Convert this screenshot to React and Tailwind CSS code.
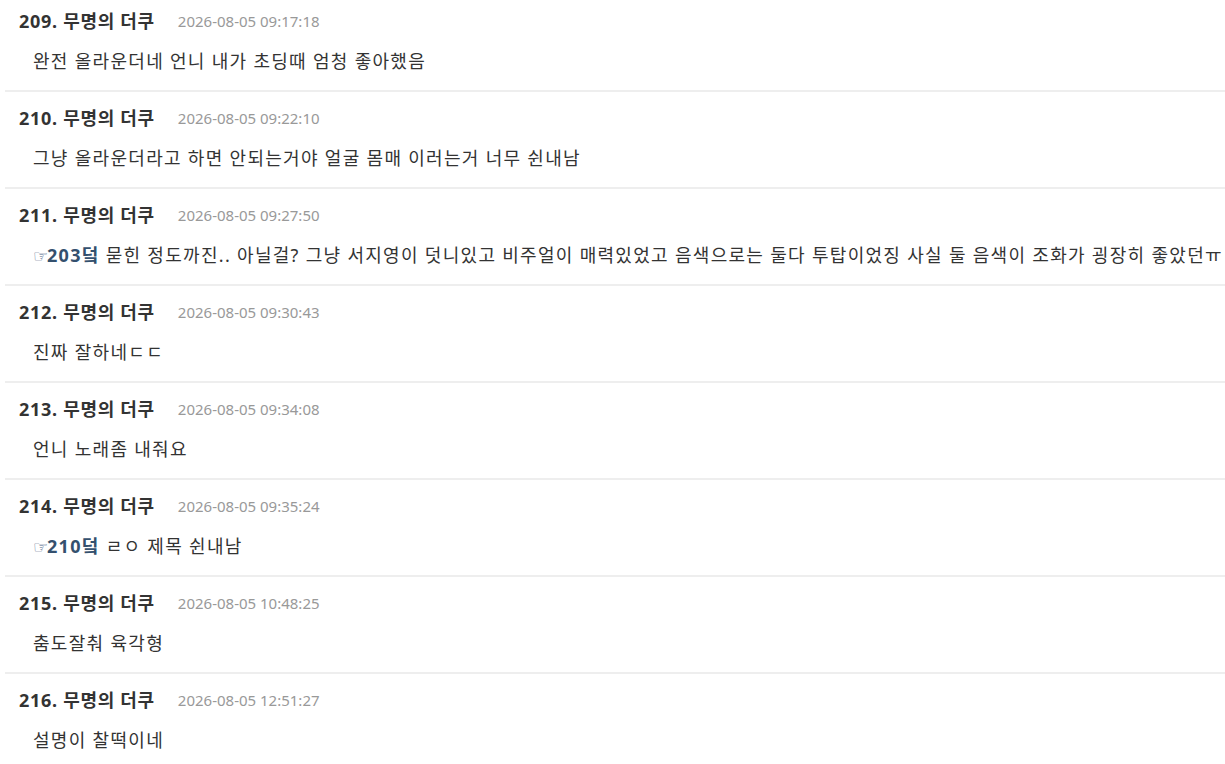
const comments = [
	{ no: 209, date: '2026-08-05 09:17:18', text: '완전 올라운더네 언니 내가 초딩때 엄청 좋아했음' },
	{ no: 210, date: '2026-08-05 09:22:10', text: '그냥 올라운더라고 하면 안되는거야 얼굴 몸매 이러는거 너무 쉰내남' },
	{
		no: 211,
		date: '2026-08-05 09:27:50',
		quote: 203,
		text: '묻힌 정도까진.. 아닐걸? 그냥 서지영이 덧니있고 비주얼이 매력있었고 음색으로는 둘다 투탑이었징 사실 둘 음색이 조화가 굉장히 좋았던ㅠ',
	},
	{ no: 212, date: '2026-08-05 09:30:43', text: '진짜 잘하네ㄷㄷ' },
	{ no: 213, date: '2026-08-05 09:34:08', text: '언니 노래좀 내줘요' },
	{ no: 214, date: '2026-08-05 09:35:24', quote: 210, text: 'ㄹㅇ 제목 쉰내남' },
	{ no: 215, date: '2026-08-05 10:48:25', text: '춤도잘춰 육각형' },
	{ no: 216, date: '2026-08-05 12:51:27', text: '설명이 찰떡이네' },
]

function Comment({ item }) {
	return (
		<div className="border-b-2 border-[#eeeeee] pl-[14px] pr-2 pt-[14px] pb-[17px]">
			<div className="flex items-center h-[24px]">
				<span className="text-[18px] font-bold tracking-[0.7px] text-[#333333]">
					{item.no}. 무명의 더쿠
				</span>
				<span className="ml-[23px] text-[15px] text-[#999999]">{item.date}</span>
			</div>
			<div className="mt-[16px] h-[24px] pl-[14px] text-[18px] tracking-[1.3px] leading-[24px] text-[#333333] whitespace-nowrap">
				{item.quote && (
					<span className="font-bold text-[#34506e]">
						<span
							className="inline-block w-[14px] text-[17px] font-normal tracking-normal text-[#4a6584]"
							style={{ fontFamily: '"DejaVu Sans", sans-serif' }}>
							☞
						</span>
						{item.quote}덬
					</span>
				)}
				{item.quote ? ' ' : ''}
				{item.text}
			</div>
		</div>
	)
}

export default function App() {
	return (
		<div
			className="bg-white h-[764px] overflow-hidden"
			style={{ fontFamily: '"Noto Sans", "Noto Sans CJK KR", sans-serif' }}>
			<div className="ml-[5px] -mt-[5px]">
				{comments.map((item) => (
					<Comment key={item.no} item={item} />
				))}
			</div>
		</div>
	)
}
